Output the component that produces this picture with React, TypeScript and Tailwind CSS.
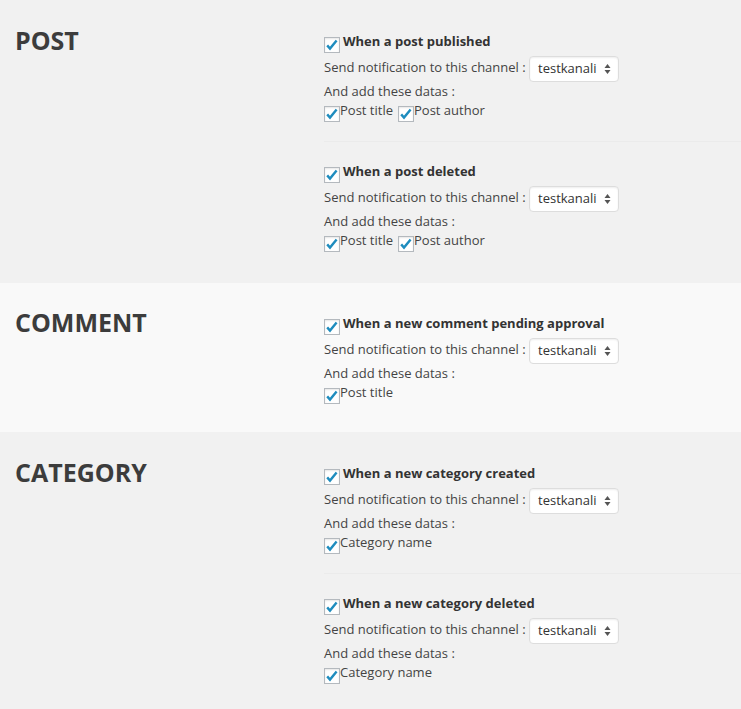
import React from "react"

type Item = { title: string; fields: string[] }
type Section = { name: string; items: Item[]; pad: string; light?: boolean }

const sections: Section[] = [
    {
        name: "POST",
        pad: "pt-[11px] pb-[12px]",
        items: [
            { title: "When a post published", fields: ["Post title", "Post author"] },
            { title: "When a post deleted", fields: ["Post title", "Post author"] },
        ],
    },
    {
        name: "COMMENT",
        pad: "pt-[10px] pb-[9px]",
        light: true,
        items: [{ title: "When a new comment pending approval", fields: ["Post title"] }],
    },
    {
        name: "CATEGORY",
        pad: "pt-[11px] pb-[12px]",
        items: [
            { title: "When a new category created", fields: ["Category name"] },
            { title: "When a new category deleted", fields: ["Category name"] },
        ],
    },
]

function Check() {
    return (
        <span className="flex h-4 w-4 shrink-0 border border-[#b4b9be] bg-white shadow-[inset_0_1px_2px_rgba(0,0,0,0.1)]">
            <svg viewBox="0 0 14 14" className="h-full w-full">
                <path d="M2.2 7.4 L5 10.6 L11.6 2.6" fill="none" stroke="#1e8cbe" strokeWidth="2.4" />
            </svg>
        </span>
    )
}

function Select() {
    return (
        <div className="flex h-[26px] w-[90px] items-center justify-between rounded-[4px] border border-[#dddddd] bg-white pl-[8px] pr-[7px] text-[13px] text-[#333] shadow-[inset_0_1px_2px_rgba(0,0,0,0.07)]">
            <span>testkanali</span>
            <svg width="7" height="12" viewBox="0 0 7 12">
                <path d="M0.5 5 L3.5 1 L6.5 5 Z" fill="#555" />
                <path d="M0.5 7 L3.5 11 L6.5 7 Z" fill="#555" />
            </svg>
        </div>
    )
}

function Event({ item, first }: { item: Item; first: boolean }) {
    return (
        <div className={first ? "pt-[20px] pb-[19px]" : "border-t border-[#ebebeb] pt-[19px] pb-[19px]"}>
            <div className="flex h-[20px] items-start">
                <span className="mt-[6px]">
                    <Check />
                </span>
                <span className="ml-[3px] font-bold leading-[20px] text-[#333]">{item.title}</span>
            </div>
            <div className="mt-[5px] flex h-[26px] items-start">
                <span className="mt-[1px] w-[205px] leading-[20px]">Send notification to this channel :</span>
                <Select />
            </div>
            <div className="leading-[18px]">And add these datas :</div>
            <div className="flex h-[22px] items-start gap-[5px]">
                {item.fields.map((f) => (
                    <span key={f} className="flex items-start">
                        <span className="mt-[6px]">
                            <Check />
                        </span>
                        <span className="leading-[20px]">{f}</span>
                    </span>
                ))}
            </div>
        </div>
    )
}

export default function App() {
    return (
        <div className="min-h-screen bg-[#f1f1f1] font-['Open_Sans',sans-serif] text-[13px] text-[#444]">
            {sections.map((s) => (
                <div key={s.name} className={`flex ${s.pad} ${s.light ? "bg-[#f9f9f9]" : "bg-[#f1f1f1]"}`}>
                    <div className="w-[324px] shrink-0 pl-[15px] pt-[14px]">
                        <h2 className="text-[25px] font-bold leading-[31px] text-[#3c3c3c]">{s.name}</h2>
                    </div>
                    <div className="flex-1">
                        {s.items.map((it, i) => (
                            <Event key={it.title} item={it} first={i === 0} />
                        ))}
                    </div>
                </div>
            ))}
        </div>
    )
}
